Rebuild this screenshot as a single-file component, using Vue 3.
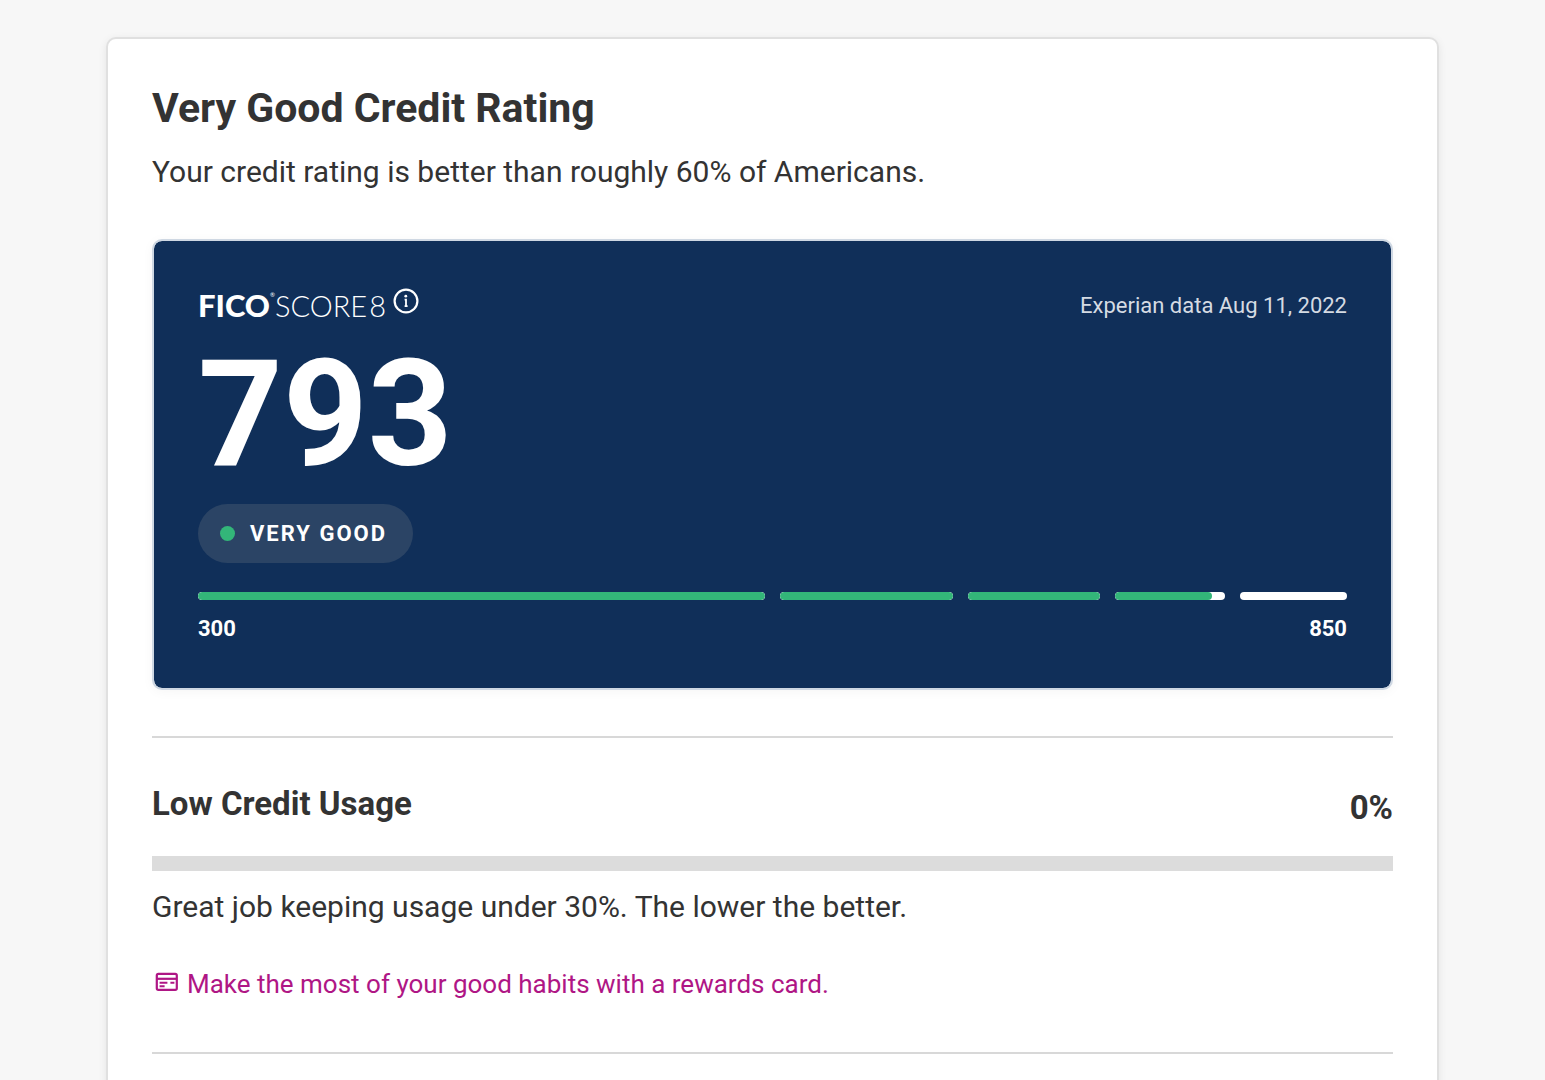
<script setup>
import { ref } from 'vue';

const score = ref(793)
const usage = ref(0)

const ranges = ref([
  { min: 300, max: 579, size: 568 },
  { min: 580, max: 669, size: 173 },
  { min: 670, max: 739, size: 132 },
  { min: 740, max: 799, size: 110 },
  { min: 800, max: 850, size: 107 },
])

function filled(range) {
  const part = (score.value - range.min) / (range.max + 1 - range.min);
  return Math.max(0, Math.min(1, part)) * 100;
}
</script>

<template>
  <main class="page">
    <section class="card">
      <h1>Very Good Credit Rating</h1>
      <p class="lead">Your credit rating is better than roughly 60% of Americans.</p>

      <div class="score-panel">
        <div class="panel-head">
          <div class="logo">
            <span class="fico">FICO</span><sup>®</sup>
            <span class="score-word">SCORE</span>
            <span class="score-version">8</span>
            <button class="info" type="button" aria-label="About your score">
              <svg viewBox="0 0 26 26" width="26" height="26">
                <circle cx="13" cy="13" r="11.4" fill="none" stroke="#fff" stroke-width="2.2" />
                <circle cx="12.8" cy="8.2" r="1.4" fill="#fff" />
                <path d="M11.6 11.6H13V18.4M11.6 18.2H14.6" fill="none" stroke="#fff" stroke-width="1.8" />
              </svg>
            </button>
          </div>
          <span class="source">Experian data Aug 11, 2022</span>
        </div>
        <div class="score">{{ score }}</div>
        <div class="rating"><i class="dot"></i>VERY GOOD</div>
        <div class="ranges">
          <div v-for="range in ranges" :key="range.min" class="range" :style="{ flexGrow: range.size }">
            <div class="fill" :style="{ width: filled(range) + '%' }"></div>
          </div>
        </div>
        <div class="limits">
          <span>300</span>
          <span>850</span>
        </div>
      </div>

      <hr>

      <div class="usage-head">
        <h2>Low Credit Usage</h2>
        <span class="percent">{{ usage }}%</span>
      </div>
      <div class="usage-bar">
        <div class="usage-fill" :style="{ width: usage + '%' }"></div>
      </div>
      <p class="usage-text">Great job keeping usage under 30%. The lower the better.</p>
      <a class="offer" href="#">
        <svg viewBox="0 0 24 20" width="24" height="20" aria-hidden="true">
          <rect x="1.8" y="1.8" width="20" height="16" rx="1.6" fill="none" stroke="currentColor" stroke-width="2.2" />
          <path d="M2 6.8H22" stroke="currentColor" stroke-width="2.2" />
          <path d="M4.6 10.8H12.4M15.4 10.8H19.4M4.6 14.2H9.6" stroke="currentColor" stroke-width="1.9" />
        </svg>
        <span>Make the most of your good habits with a rewards card.</span>
      </a>

      <hr>
    </section>
  </main>
</template>

<style>
body {
  margin: 0;
  background: #f7f7f7;
}
</style>

<style scoped>
.page {
  height: 100vh;
  padding: 37px 106px 0;
  box-sizing: border-box;
  overflow: hidden;
  font-family: Roboto, "Liberation Sans", sans-serif;
  color: #333;
}

.card {
  min-height: 100vh;
  padding: 45px 44px;
  box-sizing: border-box;
  background: #fff;
  border: 2px solid #e0e0e0;
  border-radius: 10px;
  box-shadow: 0 2px 8px rgba(0, 0, 0, 0.08);
}

h1, h2, p {
  margin: 0;
}

h1 {
  font-size: 41px;
  line-height: 48px;
  font-weight: 700;
}

.lead, .usage-text {
  font-size: 30px;
  line-height: 44px;
}

.lead {
  margin-top: 18px;
}

.score-panel {
  margin-top: 45px;
  padding: 44px;
  background: #102f59;
  border: 2px solid #cfd8e3;
  border-radius: 10px;
  background-clip: padding-box;
  color: #fff;
  box-shadow: 0 2px 12px rgba(0, 0, 0, 0.04);
}

.panel-head {
  display: flex;
  justify-content: space-between;
  align-items: center;
  height: 40px;
}

.logo {
  display: flex;
  align-items: baseline;
  font-family: Lato, sans-serif;
  line-height: 40px;
}

.fico {
  font-size: 31px;
  font-weight: 900;
}

.logo sup {
  align-self: flex-start;
  font-size: 6px;
  line-height: 20px;
}

.score-word, .score-version {
  font-size: 29px;
  font-weight: 300;
}

.score-version {
  margin-left: 2px;
}

.info {
  align-self: flex-start;
  display: flex;
  margin-left: 7px;
  padding: 3px 0 0;
  border: 0;
  background: none;
  cursor: pointer;
}

.source {
  font-size: 22px;
  color: #d5dbe3;
}

.score {
  margin-top: 16px;
  font-size: 148px;
  line-height: 148px;
  font-weight: 700;
}

.rating {
  display: inline-flex;
  align-items: center;
  height: 59px;
  margin-top: 15px;
  padding: 0 26px 0 22px;
  border-radius: 30px;
  background: #2b4465;
  font-size: 22px;
  font-weight: 700;
  letter-spacing: 2px;
}

.dot {
  width: 15px;
  height: 15px;
  margin-right: 15px;
  border-radius: 50%;
  background: #33b679;
}

.ranges {
  display: flex;
  gap: 15px;
  margin-top: 29px;
}

.range {
  flex-basis: 0;
  height: 8px;
  border-radius: 4px;
  background: #fff;
  overflow: hidden;
}

.fill {
  height: 100%;
  border-radius: 4px;
  background: #33b679;
}

.limits {
  display: flex;
  justify-content: space-between;
  margin-top: 14px;
  font-size: 22px;
  line-height: 30px;
  font-weight: 700;
}

hr {
  height: 2px;
  margin: 46px 0 0;
  border: 0;
  background: #d8d8d8;
}

.usage-head {
  display: flex;
  justify-content: space-between;
  margin-top: 44px;
  font-size: 33px;
  line-height: 44px;
  font-weight: 700;
}

h2 {
  font-size: inherit;
}

.percent {
  padding-top: 4px;
}

.usage-bar {
  height: 15px;
  margin-top: 26px;
  background: #dcdcdc;
}

.usage-fill {
  height: 100%;
  background: #33b679;
}

.usage-text {
  margin-top: 14px;
}

.offer {
  display: flex;
  align-items: center;
  gap: 8px;
  margin-top: 33px;
  padding-left: 3px;
  font-size: 26px;
  line-height: 44px;
  color: #af1685;
  text-decoration: none;
}

.offer svg {
  margin-bottom: 4px;
}

.offer:hover {
  text-decoration: underline;
}
</style>
